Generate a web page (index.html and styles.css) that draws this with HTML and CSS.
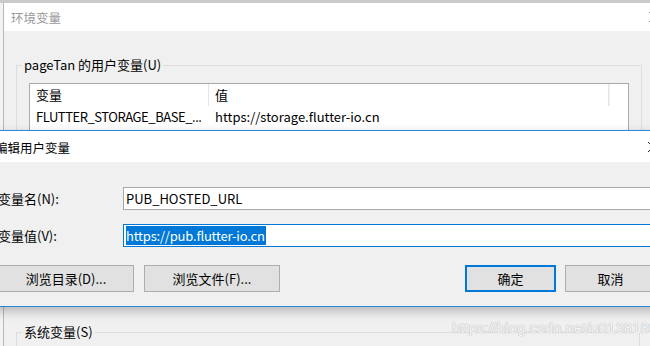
FILE: index.html
```html
<!DOCTYPE html>
<html lang="zh-CN">
<head>
  <meta charset="UTF-8">
  <title>环境变量</title>
  <link rel="stylesheet" href="styles.css">
</head>
<body>

  <!-- strip of whatever sits behind the windows -->
  <div class="desk-strip"></div>

  <!-- Back window: 环境变量 -->
  <div class="window back">
    <div class="titlebar">
      <span class="title">环境变量</span>
      <svg class="close" width="12" height="12" viewBox="0 0 12 12"><path d="M1 1 L11 11 M11 1 L1 11" stroke="#8a8a8a" stroke-width="1"/></svg>
    </div>
    <div class="win-body">
      <fieldset class="group user-vars">
        <legend>pageTan 的用户变量(U)</legend>
        <div class="listview">
          <div class="lv-row lv-head">
            <div class="lv-col name">变量</div>
            <div class="lv-col value">值</div>
            <div class="lv-col filler"></div>
          </div>
          <div class="lv-row">
            <div class="lv-col name tight">FLUTTER_STORAGE_BASE_...</div>
            <div class="lv-col value">https://storage.flutter-io.cn</div>
            <div class="lv-col filler"></div>
          </div>
        </div>
      </fieldset>
      <fieldset class="group sys-vars">
        <legend>系统变量(S)</legend>
      </fieldset>
    </div>
  </div>

  <!-- Front window: 编辑用户变量 -->
  <div class="window front">
    <div class="titlebar">
      <span class="title">编辑用户变量</span>
      <svg class="close" width="12" height="12" viewBox="0 0 12 12"><path d="M1 1 L11 11 M11 1 L1 11" stroke="#222" stroke-width="1"/></svg>
    </div>
    <div class="win-body">
      <div class="form">
        <label>变量名(N):</label>
        <div class="textbox">PUB_HOSTED_URL</div>
        <label>变量值(V):</label>
        <div class="textbox focused"><span class="selected">https://pub.flutter-io.cn</span></div>
      </div>
      <div class="btn-row">
        <div class="btn wide">浏览目录(D)...</div>
        <div class="btn wide">浏览文件(F)...</div>
        <div class="spacer"></div>
        <div class="btn default">确定</div>
        <div class="btn">取消</div>
      </div>
    </div>
  </div>

  <!-- blog watermark -->
  <div class="watermark">https://blog.csdn.net/u013818990</div>

</body>
</html>
```

FILE: styles.css
```css
html, body {
  margin: 0;
  height: 100%;
  overflow: hidden;
}

body {
  font-family: "Noto Sans CJK SC", "Noto Sans", sans-serif;
  font-size: 13px;
  color: #000;
  background: #f3f3f3;
  position: relative;
}

.desk-strip {
  height: 3px;
  background: #cacaca;
}

/* ---- windows ---- */
.window {
  background: #f0f0f0;
  box-sizing: border-box;
}

.titlebar {
  background: #fff;
  display: flex;
  align-items: center;
  justify-content: space-between;
}

.titlebar .title {
  font-size: 12.5px;
}

.back {
  margin-left: 3px;
  width: 665px;
  height: 360px;
  border-left: 1px solid #b9b9b9;
}

.back .titlebar {
  height: 28px;
  padding: 0 8px 0 7px;
}

.back .titlebar .title {
  color: #9a9a9a;
}

.back .win-body {
  padding: 25px 0 0 12px;
}

/* group boxes */
.group {
  margin: 0;
  width: 624px;
  box-sizing: border-box;
  border: 1px solid #dcdcdc;
  padding: 0 12px 0 12px;
}

.group legend {
  padding: 0 2px;
  margin-left: -7px;
  line-height: 18px;
}

.user-vars {
  height: 250px;
}

.sys-vars {
  margin-top: 17px;
  height: 60px;
}

/* list view */
.listview {
  margin-top: 9px;
  width: 598px;
  height: 160px;
  background: #fff;
  border: 1px solid #a9a9a9;
}

.lv-row {
  display: flex;
  height: 21px;
  line-height: 21px;
}

.lv-head {
  height: 22px;
  line-height: 22px;
}

.lv-col {
  padding-left: 6px;
  box-sizing: border-box;
  white-space: nowrap;
}

.lv-col.name {
  width: 179px;
}

.lv-col.tight {
  letter-spacing: -0.45px;
}

.lv-col.value {
  width: 400px;
}

.lv-col.filler {
  flex: 1;
}

.lv-head .lv-col.name,
.lv-head .lv-col.value {
  border-right: 1px solid #e5e5e5;
}

.lv-head .lv-col.filler {
  border-left: 1px solid #f0f0f0;
}

/* front dialog sits over the back window */
.front {
  position: absolute;
  left: -16px;
  top: 130px;
  width: 686px;
  border: 1px solid #2b86d9;
  box-shadow: 0 4px 10px rgba(0, 0, 0, 0.25);
}

.front .titlebar {
  height: 31px;
  padding: 0 10px 0 10px;
}

.front .titlebar .title {
  margin-top: 2px;
}

.front .win-body {
  padding: 25px 13px 14px 13px;
}

.form {
  display: grid;
  grid-template-columns: 125px 1fr;
  row-gap: 14px;
  align-items: center;
}

.form label {
  line-height: 23px;
}

.textbox {
  height: 23px;
  box-sizing: border-box;
  background: #fff;
  border: 1px solid #a9a9a9;
  padding-left: 2px;
  line-height: 21px;
  white-space: nowrap;
}

.textbox.focused {
  border-color: #0078d7;
}

.selected {
  background: #0078d7;
  color: #fff;
  display: inline-block;
  line-height: 19px;
  padding-right: 1px;
  letter-spacing: -0.2px;
}

/* buttons */
.btn-row {
  display: flex;
  gap: 10px;
  margin-top: 18px;
}

.spacer {
  flex: 1;
}

.btn {
  width: 91px;
  height: 27px;
  box-sizing: border-box;
  background: #e1e1e1;
  border: 1px solid #adadad;
  text-align: center;
  line-height: 25px;
}

.btn.wide {
  width: 136px;
}

.btn.default {
  border: 2px solid #0078d7;
  line-height: 23px;
  margin-right: -1px;
}

.watermark {
  position: absolute;
  left: 452px;
  top: 319px;
  font-family: "Liberation Sans", sans-serif;
  font-size: 15px;
  color: rgba(255, 255, 255, 0.85);
  text-shadow: 0 0 1px #b8b8b8, 0 0 1px #b8b8b8;
}
```
